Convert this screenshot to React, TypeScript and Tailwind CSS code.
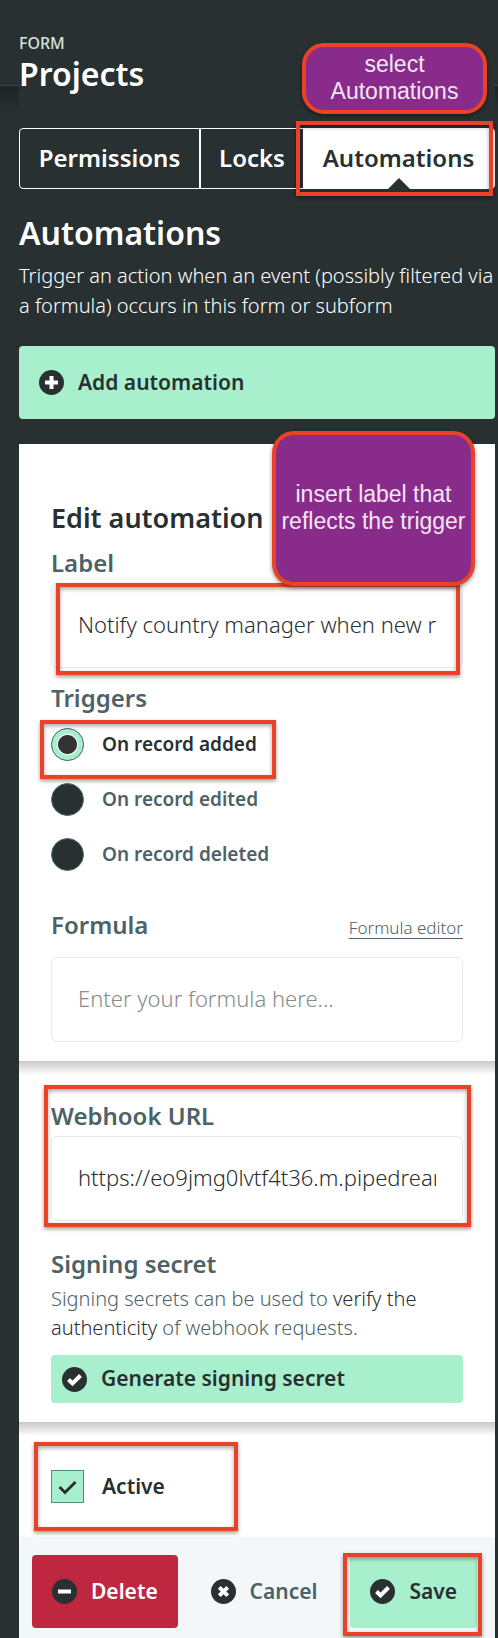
import { useState } from 'react';
import type { ReactNode } from 'react';

const TRIGGERS = ['On record added', 'On record edited', 'On record deleted'];

const ICON_PATHS = {
  plus: 'M12.5 6v13M6 12.5h13',
  check: 'M6.5 12.5l4 4 8-8',
  cross: 'M8.3 8.3l8.4 8.4M16.7 8.3l-8.4 8.4',
  minus: 'M6 12.5h13',
};

function CircleIcon({ name }: { name: keyof typeof ICON_PATHS }) {
  return (
    <svg viewBox="0 0 25 25" className="size-[25px] shrink-0" aria-hidden="true">
      <circle cx="12.5" cy="12.5" r="12.5" fill="#283031" />
      <path d={ICON_PATHS[name]} fill="none" stroke="#fff" strokeWidth="4" />
    </svg>
  );
}

// red frame drawn over the part of the form being explained
function Highlight({ className }: { className: string }) {
  return (
    <span
      aria-hidden="true"
      className={`pointer-events-none absolute border-4 border-[#ea4226] shadow-[0_2px_4px_rgba(0,0,0,0.4),inset_0_2px_4px_rgba(0,0,0,0.35)] ${className}`}
    />
  );
}

function Callout({ className, children }: { className: string; children: ReactNode }) {
  return (
    <div
      className={`absolute z-10 flex items-center justify-center rounded-[22px] border-4 border-[#ea4226] bg-[#892b8b] pb-0.5 text-center font-['Liberation_Sans',sans-serif] text-[23px] leading-[27px] font-normal whitespace-nowrap text-[#f3e6f4] shadow-[0_2px_4px_rgba(0,0,0,0.4)] ${className}`}
    >
      {children}
    </div>
  );
}

const fieldClass =
  'block h-[85px] w-full rounded-md border border-[#e6eaea] bg-white px-[26px] pb-1 text-[22px] font-light text-[#283031] outline-none placeholder:text-[#868b8b]';
const labelClass = 'block text-2xl leading-8 font-semibold text-[#4d6266]';

export default function App() {
  const [label, setLabel] = useState('Notify country manager when new record is added');
  const [trigger, setTrigger] = useState(TRIGGERS[0]);
  const [formula, setFormula] = useState('');
  const [url, setUrl] = useState('https://eo9jmg0lvtf4t36.m.pipedream.net');
  const [active, setActive] = useState(true);

  return (
    <div className="min-h-screen overflow-hidden bg-[#283031] bg-[linear-gradient(#283031_85px,#3b4344_85px,#3b4344_86px,#1e2526_86px,#283031_116px)] pr-[3px] pl-[19px] font-['Noto_Sans',sans-serif] text-[#283031]">
      <main className="bg-[#283031]">
        <header className="relative pt-8 text-white">
          <p className="text-base leading-[22px] font-medium text-[#d5e3de]">FORM</p>
          <h1 className="text-[32px] leading-10 font-semibold">Projects</h1>
          <Callout className="top-[43px] right-2 h-[71px] w-[185px]">
            select
            <br />
            Automations
          </Callout>
        </header>

        <nav className="mt-[34px] flex h-[61px] rounded border border-white text-2xl font-semibold text-white">
          <button type="button" className="w-[181px] border-r-2 border-white pb-0.5">Permissions</button>
          <button type="button" className="w-[102px] pb-0.5">Locks</button>
          <div className="relative flex flex-1">
            <button type="button" aria-current="page" className="flex-1 bg-white pb-0.5 text-[#283031]">Automations</button>
            <svg viewBox="0 0 22 11" className="absolute -bottom-px left-1/2 h-[11px] w-[22px] -translate-x-1/2" aria-hidden="true">
              <path d="M0 11L11 0l11 11z" fill="#283031" />
            </svg>
            <Highlight className="-top-2 right-px -bottom-2 -left-[7px]" />
          </div>
        </nav>

        <h2 className="mt-6 text-[32px] leading-10 font-semibold text-white">Automations</h2>
        <p className="mt-2 text-xl leading-[30px] font-light text-white">
          Trigger an action when an event (possibly filtered via a formula) occurs in this form or subform
        </p>

        <button type="button" className="mt-[25px] flex h-[73px] w-full items-center gap-3.5 rounded bg-[#a8f0cd] px-5 text-[21px] font-semibold">
          <CircleIcon name="plus" />
          Add automation
        </button>

        <form className="mt-[25px] bg-white" onSubmit={(e) => e.preventDefault()}>
          <section className="relative px-8 pt-[58px] pb-[19px]">
            <Callout className="-top-[13px] right-5 h-[155px] w-[203px]">
              insert label that
              <br />
              reflects the trigger
            </Callout>
            <h3 className="text-[27px] leading-8 font-semibold">Edit automation</h3>
            <label htmlFor="label" className={`mt-[13px] ${labelClass}`}>Label</label>
            <div className="relative mt-1">
              <input id="label" value={label} onChange={(e) => setLabel(e.target.value)} className={fieldClass} />
              <Highlight className="top-0 right-[3px] -bottom-[7px] left-[5px]" />
            </div>

            <fieldset className="mt-3.5">
              <legend className={labelClass}>Triggers</legend>
              <div className="mt-3.5 flex flex-col gap-[22px]">
                {TRIGGERS.map((t, i) => (
                  <label
                    key={t}
                    className={`relative flex items-center gap-[18px] text-[19px] leading-[33px] font-semibold ${t === trigger ? 'text-[#283031]' : 'text-[#4d6266]'}`}
                  >
                    <input
                      type="radio"
                      name="trigger"
                      checked={t === trigger}
                      onChange={() => setTrigger(t)}
                      className="size-[33px] shrink-0 appearance-none rounded-full border border-[#4d6f70] bg-[#283031] checked:bg-[radial-gradient(circle,#333_9px,#fff_10px,#a8f0cd_11px)]"
                    />
                    {t}
                    {i === 0 && <Highlight className="-top-2 -bottom-[18px] -left-[11px] w-[236px]" />}
                  </label>
                ))}
              </div>
            </fieldset>

            <div className="mt-[38px] flex h-8 items-baseline justify-between">
              <label htmlFor="formula" className={labelClass}>Formula</label>
              <a href="#formula-editor" className="text-[17px] leading-8 font-light text-[#4d6266] underline underline-offset-4">Formula editor</a>
            </div>
            <input
              id="formula"
              value={formula}
              onChange={(e) => setFormula(e.target.value)}
              placeholder="Enter your formula here..."
              className={`mt-4 ${fieldClass}`}
            />
          </section>

          <section className="bg-[linear-gradient(#c8c8c8,#fff_14px)] px-8 pt-6 pb-[19px]">
            <div className="relative pt-[15px]">
              <label htmlFor="url" className={labelClass}>Webhook URL</label>
              <input id="url" value={url} onChange={(e) => setUrl(e.target.value)} className={`mt-1 ${fieldClass}`} />
              <Highlight className="top-0 -right-2 -bottom-1.5 -left-[7px]" />
            </div>
            <h4 className={`mt-[27px] ${labelClass}`}>Signing secret</h4>
            <p className="mt-1 text-xl leading-[29px] font-light text-[#4d6266]">
              Signing secrets can be used to{' '}
              <a href="#verify" className="text-[#283031]">verify the authenticity</a> of webhook requests.
            </p>
            <button type="button" className="mt-[13px] flex h-12 w-full items-center gap-3.5 rounded bg-[#a8f0cd] px-[11px] text-[21px] font-semibold">
              <CircleIcon name="check" />
              Generate signing secret
            </button>
          </section>

          <section className="bg-[linear-gradient(#c8c8c8,#fff_14px)] px-8 pt-12 pb-[34px]">
            <label className="relative flex items-center gap-[18px] text-[21px] leading-[33px] font-semibold">
              <input
                type="checkbox"
                checked={active}
                onChange={(e) => setActive(e.target.checked)}
                className="peer size-[33px] shrink-0 appearance-none border border-[#4b9186] bg-white checked:bg-[#a8f0cd]"
              />
              <svg viewBox="0 0 33 33" className="absolute left-0 hidden size-[33px] peer-checked:block" aria-hidden="true">
                <path d="M8.5 17l5.5 5.5L24.5 12" fill="none" stroke="#283031" strokeWidth="3" />
              </svg>
              Active
              <Highlight className="-top-7 -bottom-7 -left-[17px] w-[204px]" />
            </label>
          </section>

          <footer className="flex items-center bg-[#f3f7f9] pt-[18px] pr-[18px] pb-2.5 pl-[13px] text-[21px] font-semibold">
            <button type="button" className="flex h-[73px] items-center gap-3.5 rounded bg-[#bf2741] px-5 text-white">
              <CircleIcon name="minus" />
              Delete
            </button>
            <button type="button" className="flex h-[73px] flex-1 items-center justify-center gap-3.5 text-[#4d6266]">
              <CircleIcon name="cross" />
              Cancel
            </button>
            <div className="relative">
              <button type="submit" className="flex h-[73px] items-center gap-3.5 rounded bg-[#a8f0cd] px-5">
                <CircleIcon name="check" />
                Save
              </button>
              <Highlight className="-top-0.5 -right-[5px] -bottom-2 -left-[7px]" />
            </div>
          </footer>
        </form>
      </main>
    </div>
  );
}
